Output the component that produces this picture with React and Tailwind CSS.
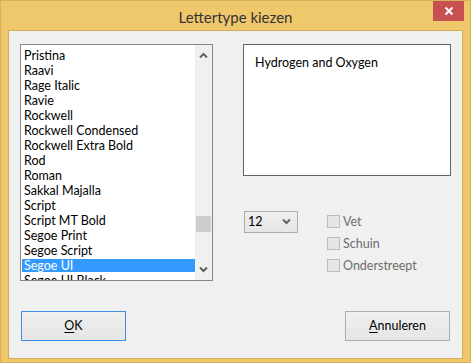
import React from "react";

const fonts = [
  "Pristina",
  "Raavi",
  "Rage Italic",
  "Ravie",
  "Rockwell",
  "Rockwell Condensed",
  "Rockwell Extra Bold",
  "Rod",
  "Roman",
  "Sakkal Majalla",
  "Script",
  "Script MT Bold",
  "Segoe Print",
  "Segoe Script",
  "Segoe UI",
  "Segoe UI Black",
];

function Chevron({ up }) {
  return (
    <svg width="9" height="6" viewBox="0 0 9 6">
      <path
        d={up ? "M1 5.5 L4.5 2 L8 5.5" : "M1 0.5 L4.5 4 L8 0.5"}
        fill="none"
        stroke="#606060"
        strokeWidth="2"
      />
    </svg>
  );
}

function Check({ label }) {
  return (
    <div className="flex items-center h-[13px] gap-[3px]">
      <div className="w-[13px] h-[13px] border border-[#bcbcbc] bg-[#e6e6e6]" />
      <span className="text-[#6d6d6d] leading-[13px]">{label}</span>
    </div>
  );
}

export default function App() {
  return (
    <div
      className="w-[471px] h-[363px] bg-[#f0c86c] border border-[#d8b159] flex flex-col text-[12.5px] text-black"
      style={{ fontFamily: "Lato, 'Noto Sans', sans-serif" }}
    >
      {/* Title bar */}
      <div className="h-[29px] flex items-start relative">
        <div className="flex-1 text-center text-[15px] text-[#333] pt-[7px] leading-[18px]">
          Lettertype kiezen
        </div>
        <div className="absolute right-[6px] top-0 w-[31px] h-[20px] bg-[#c75050] flex items-center justify-center">
          <svg width="10" height="10" viewBox="0 0 10 10">
            <path d="M1.5 1.5 L8.5 8.5 M8.5 1.5 L1.5 8.5" stroke="#fff" strokeWidth="2" />
          </svg>
        </div>
      </div>

      {/* Client */}
      <div className="mx-[7px] h-[329px] bg-[#f0f0f0] border border-[#d3aa55] flex flex-col">
        <div className="flex pl-[11px] pt-[13px]">
          {/* Font list */}
          <div className="w-[193px] h-[237px] border border-[#828790] bg-white flex overflow-hidden">
            <div className="flex-1 pt-[3px] overflow-hidden">
              {fonts.map((f) => (
                <div key={f} className="h-[15px] py-[1px] pl-[1px]">
                  <div
                    className={
                      "h-[13px] leading-[13px] pl-[2px] whitespace-nowrap " +
                      (f === "Segoe UI" ? "bg-[#3399ff] text-white" : "")
                    }
                  >
                    {f}
                  </div>
                </div>
              ))}
            </div>
            <div className="w-[17px] bg-[#f0f0f0] flex flex-col items-center">
              <div className="h-[20px] flex items-center pt-[1px]">
                <Chevron up />
              </div>
              <div className="h-[152px]" />
              <div className="w-[15px] h-[17px] bg-[#cdcdcd]" />
              <div className="h-[28px]" />
              <div className="h-[20px] flex items-center">
                <Chevron />
              </div>
            </div>
          </div>

          {/* Right column */}
          <div className="ml-[30px] flex flex-col">
            <div className="w-[208px] h-[132px] border border-[#646464] bg-white pl-[11px] pt-[10px] leading-[16px]">
              Hydrogen and Oxygen
            </div>
            <div className="flex mt-[35px]">
              <div className="ml-[1px] w-[54px] h-[22px] border border-[#acacac] bg-gradient-to-b from-[#f0f0f0] to-[#e5e5e5] flex items-center justify-between pl-[3px] pr-[6px]">
                <span>12</span>
                <Chevron />
              </div>
              <div className="ml-[29px] mt-[4px] flex flex-col gap-[9px]">
                <Check label="Vet" />
                <Check label="Schuin" />
                <Check label="Onderstreept" />
              </div>
            </div>
          </div>
        </div>

        {/* Buttons */}
        <div className="flex justify-between pl-[12px] pr-[12px] mt-[30px]">
          <button className="w-[105px] h-[30px] border border-[#3c8fe5] bg-gradient-to-b from-[#f0f0f0] to-[#e5e5e5]">
            <span className="underline underline-offset-2">O</span>K
          </button>
          <button className="w-[105px] h-[30px] border border-[#adadad] bg-gradient-to-b from-[#f0f0f0] to-[#e5e5e5]">
            <span className="underline underline-offset-2">A</span>nnuleren
          </button>
        </div>
      </div>
    </div>
  );
}
